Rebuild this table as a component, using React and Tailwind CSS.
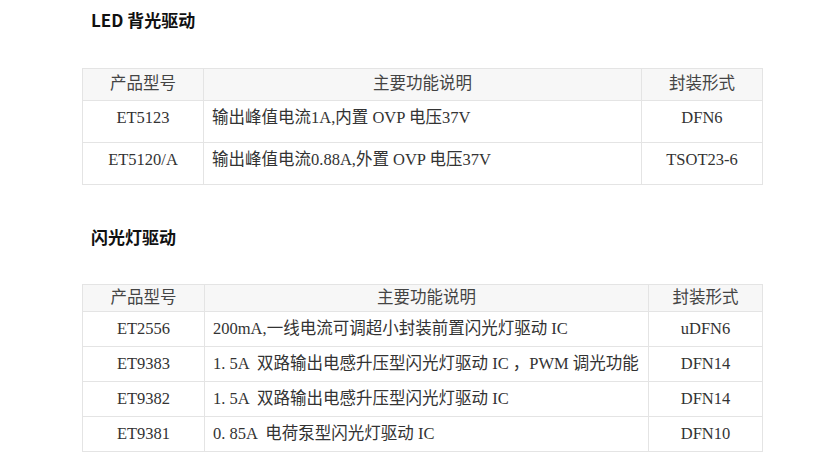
import React from 'react';

const ledRows = [
  { model: 'ET5123', desc: '输出峰值电流1A,内置 OVP 电压37V', pkg: 'DFN6' },
  { model: 'ET5120/A', desc: '输出峰值电流0.88A,外置 OVP 电压37V', pkg: 'TSOT23-6' },
];

const flashRows = [
  { model: 'ET2556', desc: '200mA,一线电流可调超小封装前置闪光灯驱动 IC', pkg: 'uDFN6' },
  { model: 'ET9383', desc: '1. 5A  双路输出电感升压型闪光灯驱动 IC ，PWM 调光功能', pkg: 'DFN14' },
  { model: 'ET9382', desc: '1. 5A  双路输出电感升压型闪光灯驱动 IC', pkg: 'DFN14' },
  { model: 'ET9381', desc: '0. 85A  电荷泵型闪光灯驱动 IC', pkg: 'DFN10' },
];

function Heading({ children }) {
  return (
    <h2 className="text-[17px] font-bold leading-6 text-[#111] font-['Noto_Sans_CJK_SC','Noto_Sans',sans-serif] pl-[9px]">
      {children}
    </h2>
  );
}

function ProductTable({ rows, widths, headH, rowH, topAlign }) {
  const cell = 'border border-[#e4e4e4] px-2 whitespace-pre';
  const rowCell = topAlign ? 'align-top pt-[5px]' : 'align-middle';
  return (
    <table className="border-collapse w-[680px] table-fixed text-[16.5px] text-[#333] font-['Liberation_Serif','Noto_Sans_CJK_SC',serif]">
      <colgroup>
        <col className={widths[0]} />
        <col className={widths[1]} />
        <col className={widths[2]} />
      </colgroup>
      <thead>
        <tr className={`bg-[#f7f7f7] ${headH}`}>
          <th className={`${cell} font-normal text-center text-[#444]`}>产品型号</th>
          <th className={`${cell} font-normal text-center text-[#444]`}>主要功能说明</th>
          <th className={`${cell} font-normal text-center text-[#444]`}>封装形式</th>
        </tr>
      </thead>
      <tbody>
        {rows.map((r) => (
          <tr key={r.model} className={rowH}>
            <td className={`${cell} ${rowCell} text-center`}>{r.model}</td>
            <td className={`${cell} ${rowCell} text-left`}>{r.desc}</td>
            <td className={`${cell} ${rowCell} text-center`}>{r.pkg}</td>
          </tr>
        ))}
      </tbody>
    </table>
  );
}

export default function App() {
  return (
    <div className="w-[825px] h-[470px] bg-white overflow-hidden pl-[82px] pt-[8px]">
      <Heading>LED 背光驱动</Heading>
      <div className="mt-[36px]">
        <ProductTable
          rows={ledRows}
          widths={['w-[121px]', 'w-[438px]', 'w-[121px]']}
          headH="h-[32px]"
          rowH="h-[42px]"
          topAlign
        />
      </div>
      <div className="mt-[40px]">
        <Heading>闪光灯驱动</Heading>
      </div>
      <div className="mt-[35px]">
        <ProductTable
          rows={flashRows}
          widths={['w-[122px]', 'w-[444px]', 'w-[114px]']}
          headH="h-[27px]"
          rowH="h-[35px]"
        />
      </div>
    </div>
  );
}
